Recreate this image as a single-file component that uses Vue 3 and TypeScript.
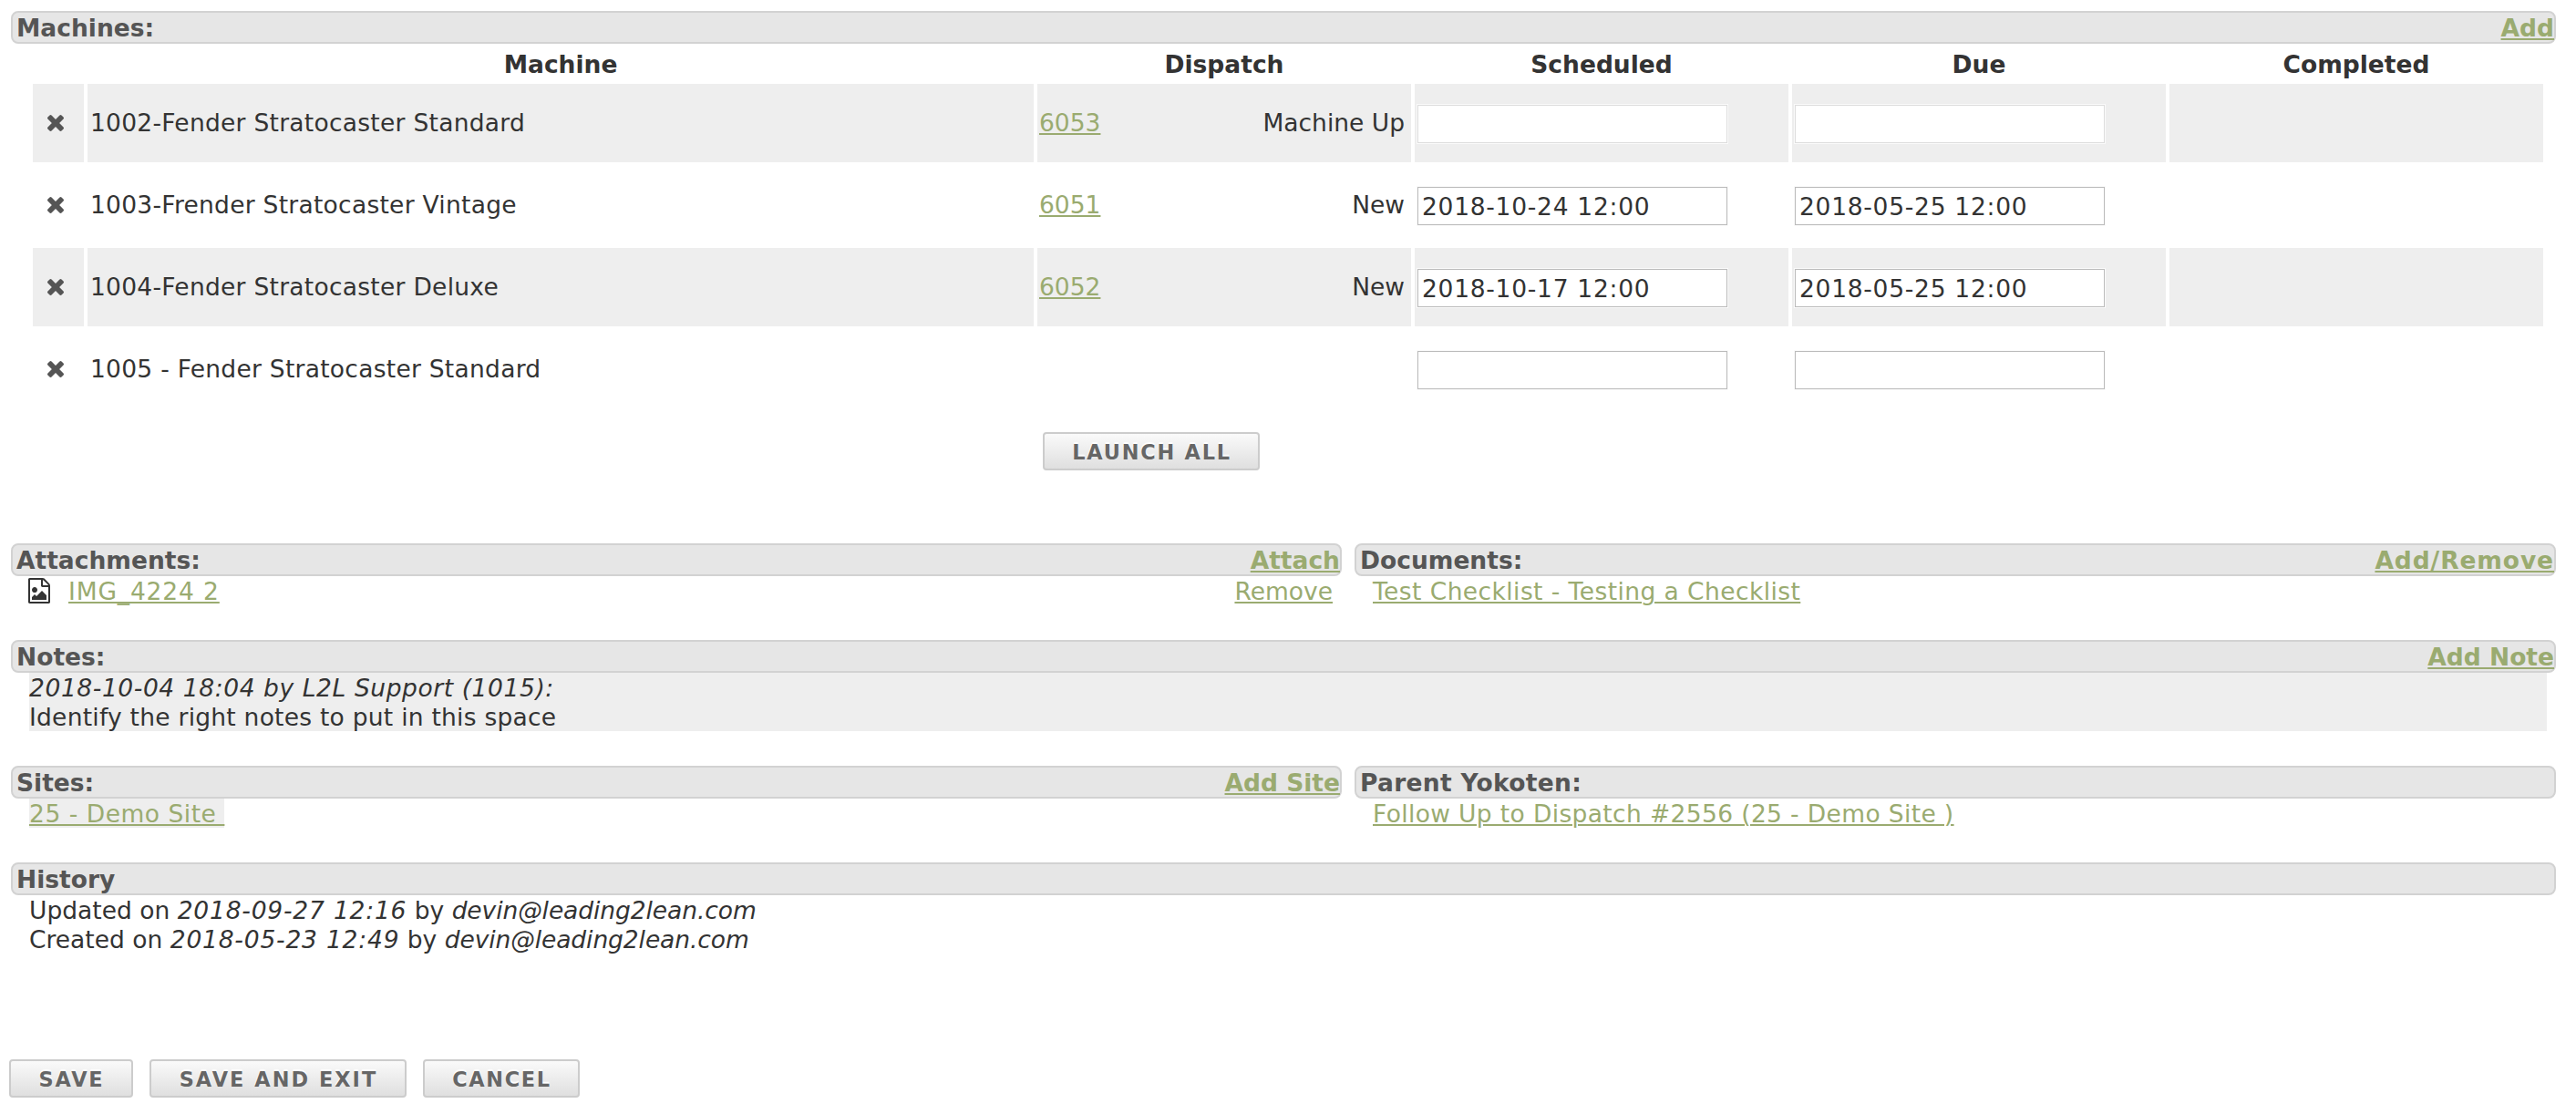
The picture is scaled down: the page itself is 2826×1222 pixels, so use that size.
<script setup lang="ts">
import { ref } from 'vue'

interface MachineRow {
  name: string
  dispatch?: string
  status?: string
  scheduled: string
  due: string
  disabled?: boolean
}

const machines = ref<MachineRow[]>([
  { name: '1002-Fender Stratocaster Standard', dispatch: '6053', status: 'Machine Up', scheduled: '', due: '', disabled: true },
  { name: '1003-Frender Stratocaster Vintage', dispatch: '6051', status: 'New', scheduled: '2018-10-24 12:00', due: '2018-05-25 12:00' },
  { name: '1004-Fender Stratocaster Deluxe', dispatch: '6052', status: 'New', scheduled: '2018-10-17 12:00', due: '2018-05-25 12:00' },
  { name: '1005 - Fender Stratocaster Standard', scheduled: '', due: '' },
])

const history = [
  { action: 'Updated', at: '2018-09-27 12:16', by: 'devin@leading2lean.com' },
  { action: 'Created', at: '2018-05-23 12:49', by: 'devin@leading2lean.com' },
]
</script>

<template>
  <main class="page">
    <section class="machines">
      <header class="bar"><h2>Machines:</h2><a>Add</a></header>
      <div class="grid head">
        <span></span><span>Machine</span><span>Dispatch</span><span>Scheduled</span><span>Due</span><span>Completed</span>
      </div>
      <div v-for="(m, i) in machines" :key="i" class="grid row">
        <div class="cell remove">
          <svg viewBox="302 366 1188 1188" width="18" height="18"><path d="M1490 1322q0 40-28 68l-136 136q-28 28-68 28t-68-28l-294-294-294 294q-28 28-68 28t-68-28l-136-136q-28-28-28-68t28-68l294-294-294-294q-28-28-28-68t28-68l136-136q28-28 68-28t68 28l294 294 294-294q28-28 68-28t68 28l136 136q28 28 28 68t-28 68l-294 294 294 294q28 28 28 68z" /></svg>
        </div>
        <div class="cell name">{{ m.name }}</div>
        <div class="cell dispatch"><a>{{ m.dispatch }}</a><span>{{ m.status }}</span></div>
        <div class="cell date"><input v-model="m.scheduled" type="text" :disabled="m.disabled" /></div>
        <div class="cell date due"><input v-model="m.due" type="text" :disabled="m.disabled" /></div>
        <div class="cell"></div>
      </div>
      <button class="btn launch" type="button">LAUNCH ALL</button>
    </section>

    <div class="pair">
      <section>
        <header class="bar"><h2>Attachments:</h2><a>Attach</a></header>
        <div class="body attachment">
          <svg viewBox="128 0 1536 1792" width="24" height="28"><path d="M1596 380q28 28 48 76t20 88v1152q0 40-28 68t-68 28h-1344q-40 0-68-28t-28-68v-1600q0-40 28-68t68-28h896q40 0 88 20t76 48zm-444-244v376h376q-10-29-22-41l-313-313q-12-12-41-22zm384 1528v-1024h-416q-40 0-68-28t-28-68v-416h-768v1536h1280zm-128-448v320h-1024v-192l192-192 128 128 384-384zm-832-192q-80 0-136-56t-56-136 56-136 136-56 136 56 56 136-56 136-136 56z" /></svg>
          <a class="file">IMG_4224 2</a>
          <a class="detach">Remove</a>
        </div>
      </section>
      <section>
        <header class="bar"><h2>Documents:</h2><a class="manage">Add/Remove</a></header>
        <div class="body"><a class="doc">Test Checklist - Testing a Checklist</a></div>
      </section>
    </div>

    <section class="notes">
      <header class="bar"><h2>Notes:</h2><a>Add Note</a></header>
      <div class="body flush">
        <div class="note">
          <em>2018-10-04 18:04 by L2L Support (1015):</em>
          <p>Identify the right notes to put in this space</p>
        </div>
      </div>
    </section>

    <div class="pair">
      <section>
        <header class="bar"><h2>Sites:</h2><a class="site-add">Add Site</a></header>
        <div class="body flush"><a class="site">{{ '25 - Demo Site ' }}</a></div>
      </section>
      <section>
        <header class="bar"><h2 class="parent">Parent Yokoten:</h2></header>
        <div class="body"><a class="follow">Follow Up to Dispatch #2556 (25 - Demo Site )</a></div>
      </section>
    </div>

    <section class="history">
      <header class="bar"><h2>History</h2></header>
      <div class="body">
        <p v-for="h in history" :key="h.at">{{ h.action }} on <em class="at">{{ h.at }}</em> by <em class="by">{{ h.by }}</em></p>
      </div>
    </section>

    <footer class="actions">
      <button class="btn save" type="button">SAVE</button>
      <button class="btn save-exit" type="button">SAVE AND EXIT</button>
      <button class="btn cancel" type="button">CANCEL</button>
    </footer>
  </main>
</template>

<style>
body {
  background: #fff;
}
</style>

<style scoped>
.page {
  box-sizing: border-box;
  width: 2826px;
  height: 1222px;
  padding: 12px 22px 0 12px;
  overflow: hidden;
  font: 26.5px/32px "DejaVu Sans", Verdana, sans-serif;
  color: #333;
}
h2, p {
  margin: 0;
  font-size: inherit;
}
a {
  color: #9aab70;
  text-decoration: underline;
  text-decoration-thickness: 2px;
  text-underline-offset: 2px;
}
svg {
  display: block;
  fill: #333;
}
.bar {
  display: flex;
  justify-content: space-between;
  box-sizing: border-box;
  height: 36px;
  padding: 1px 0 0 4px;
  border: 2px solid #d2d2d2;
  border-radius: 8px;
  background: #e6e6e6;
  color: #555;
  font-weight: bold;
}
.body {
  padding: 1px 10px 0 20px;
}
.body.flush {
  padding-top: 0;
}
.machines {
  height: 584px;
}
.grid {
  display: grid;
  grid-template-columns: 56px 1038px 410px 410px 410px 410px;
  column-gap: 4px;
  margin-left: 24px;
}
.head {
  height: 44px;
  box-sizing: border-box;
  padding-top: 7px;
  font-weight: bold;
  text-align: center;
}
.row {
  height: 86px;
  margin-bottom: 4px;
}
.row:nth-child(odd) .cell {
  background: #eee;
}
.cell {
  display: flex;
  align-items: center;
  padding-left: 2px;
}
.remove {
  padding-left: 16px;
}
.remove svg {
  fill: #555;
}
.name {
  padding-left: 3px;
  letter-spacing: 0.26px;
}
.dispatch {
  justify-content: space-between;
  padding-right: 7px;
}
.date {
  padding-left: 3px;
}
.date input {
  box-sizing: border-box;
  width: 340px;
  height: 42px;
  margin: 1px 0 0;
  padding: 2px 3px 0 4px;
  border: 1px solid #bbb;
  border-radius: 0;
  outline: none;
  background: #fff;
  box-shadow: 0 0 0 1px #fafafa;
  color: #333;
  font: inherit;
  letter-spacing: 0.72px;
}
.date input:disabled {
  border-color: #ddd;
}
.btn {
  box-sizing: border-box;
  height: 42px;
  padding: 2px 0 0 1px;
  border: 2px solid #ccc;
  border-radius: 4px;
  background: linear-gradient(#fafafa, #dfdfdf);
  color: #666;
  font: bold 22.4px/36px "DejaVu Sans", Verdana, sans-serif;
  letter-spacing: 1.8px;
  text-shadow: 0 -2px 1px #fff;
  white-space: nowrap;
}
.launch {
  display: block;
  width: 238px;
  margin: 26px 0 0 1132px;
}
.pair {
  display: grid;
  grid-template-columns: 1460px 1318px;
  column-gap: 14px;
}
.pair {
  margin-bottom: 37px;
}
.notes {
  margin-bottom: 38px;
}
.attachment {
  display: flex;
}
.file {
  margin-left: 19px;
  letter-spacing: 0.86px;
  text-decoration-skip-ink: none;
}
.attachment svg {
  margin: 1px 1px 0 -1px;
}
.detach {
  margin-left: auto;
}
.manage {
  letter-spacing: 0.9px;
}
.doc {
  letter-spacing: 0.42px;
}
.note {
  box-sizing: border-box;
  height: 64px;
  padding-top: 1px;
  background: #eee;
}
.note em {
  display: block;
  letter-spacing: 0.58px;
}
.note p {
  letter-spacing: 0.24px;
}
.site {
  display: inline-block;
  box-sizing: border-box;
  height: 32px;
  padding-top: 1px;
  background: #eee;
  letter-spacing: 0.52px;
  vertical-align: top;
  white-space: pre;
}
.parent {
  letter-spacing: 0.3px;
}
.follow {
  letter-spacing: 0.36px;
}
.at {
  letter-spacing: 0.8px;
}
.by {
  letter-spacing: -0.08px;
}
.history {
  height: 216px;
}
.actions {
  display: flex;
  margin-left: -2px;
}
.save {
  width: 136px;
}
.save-exit {
  width: 282px;
  margin-left: 18px;
  letter-spacing: 2.05px;
}
.cancel {
  width: 172px;
  margin-left: 18px;
  letter-spacing: 1.7px;
}
</style>
